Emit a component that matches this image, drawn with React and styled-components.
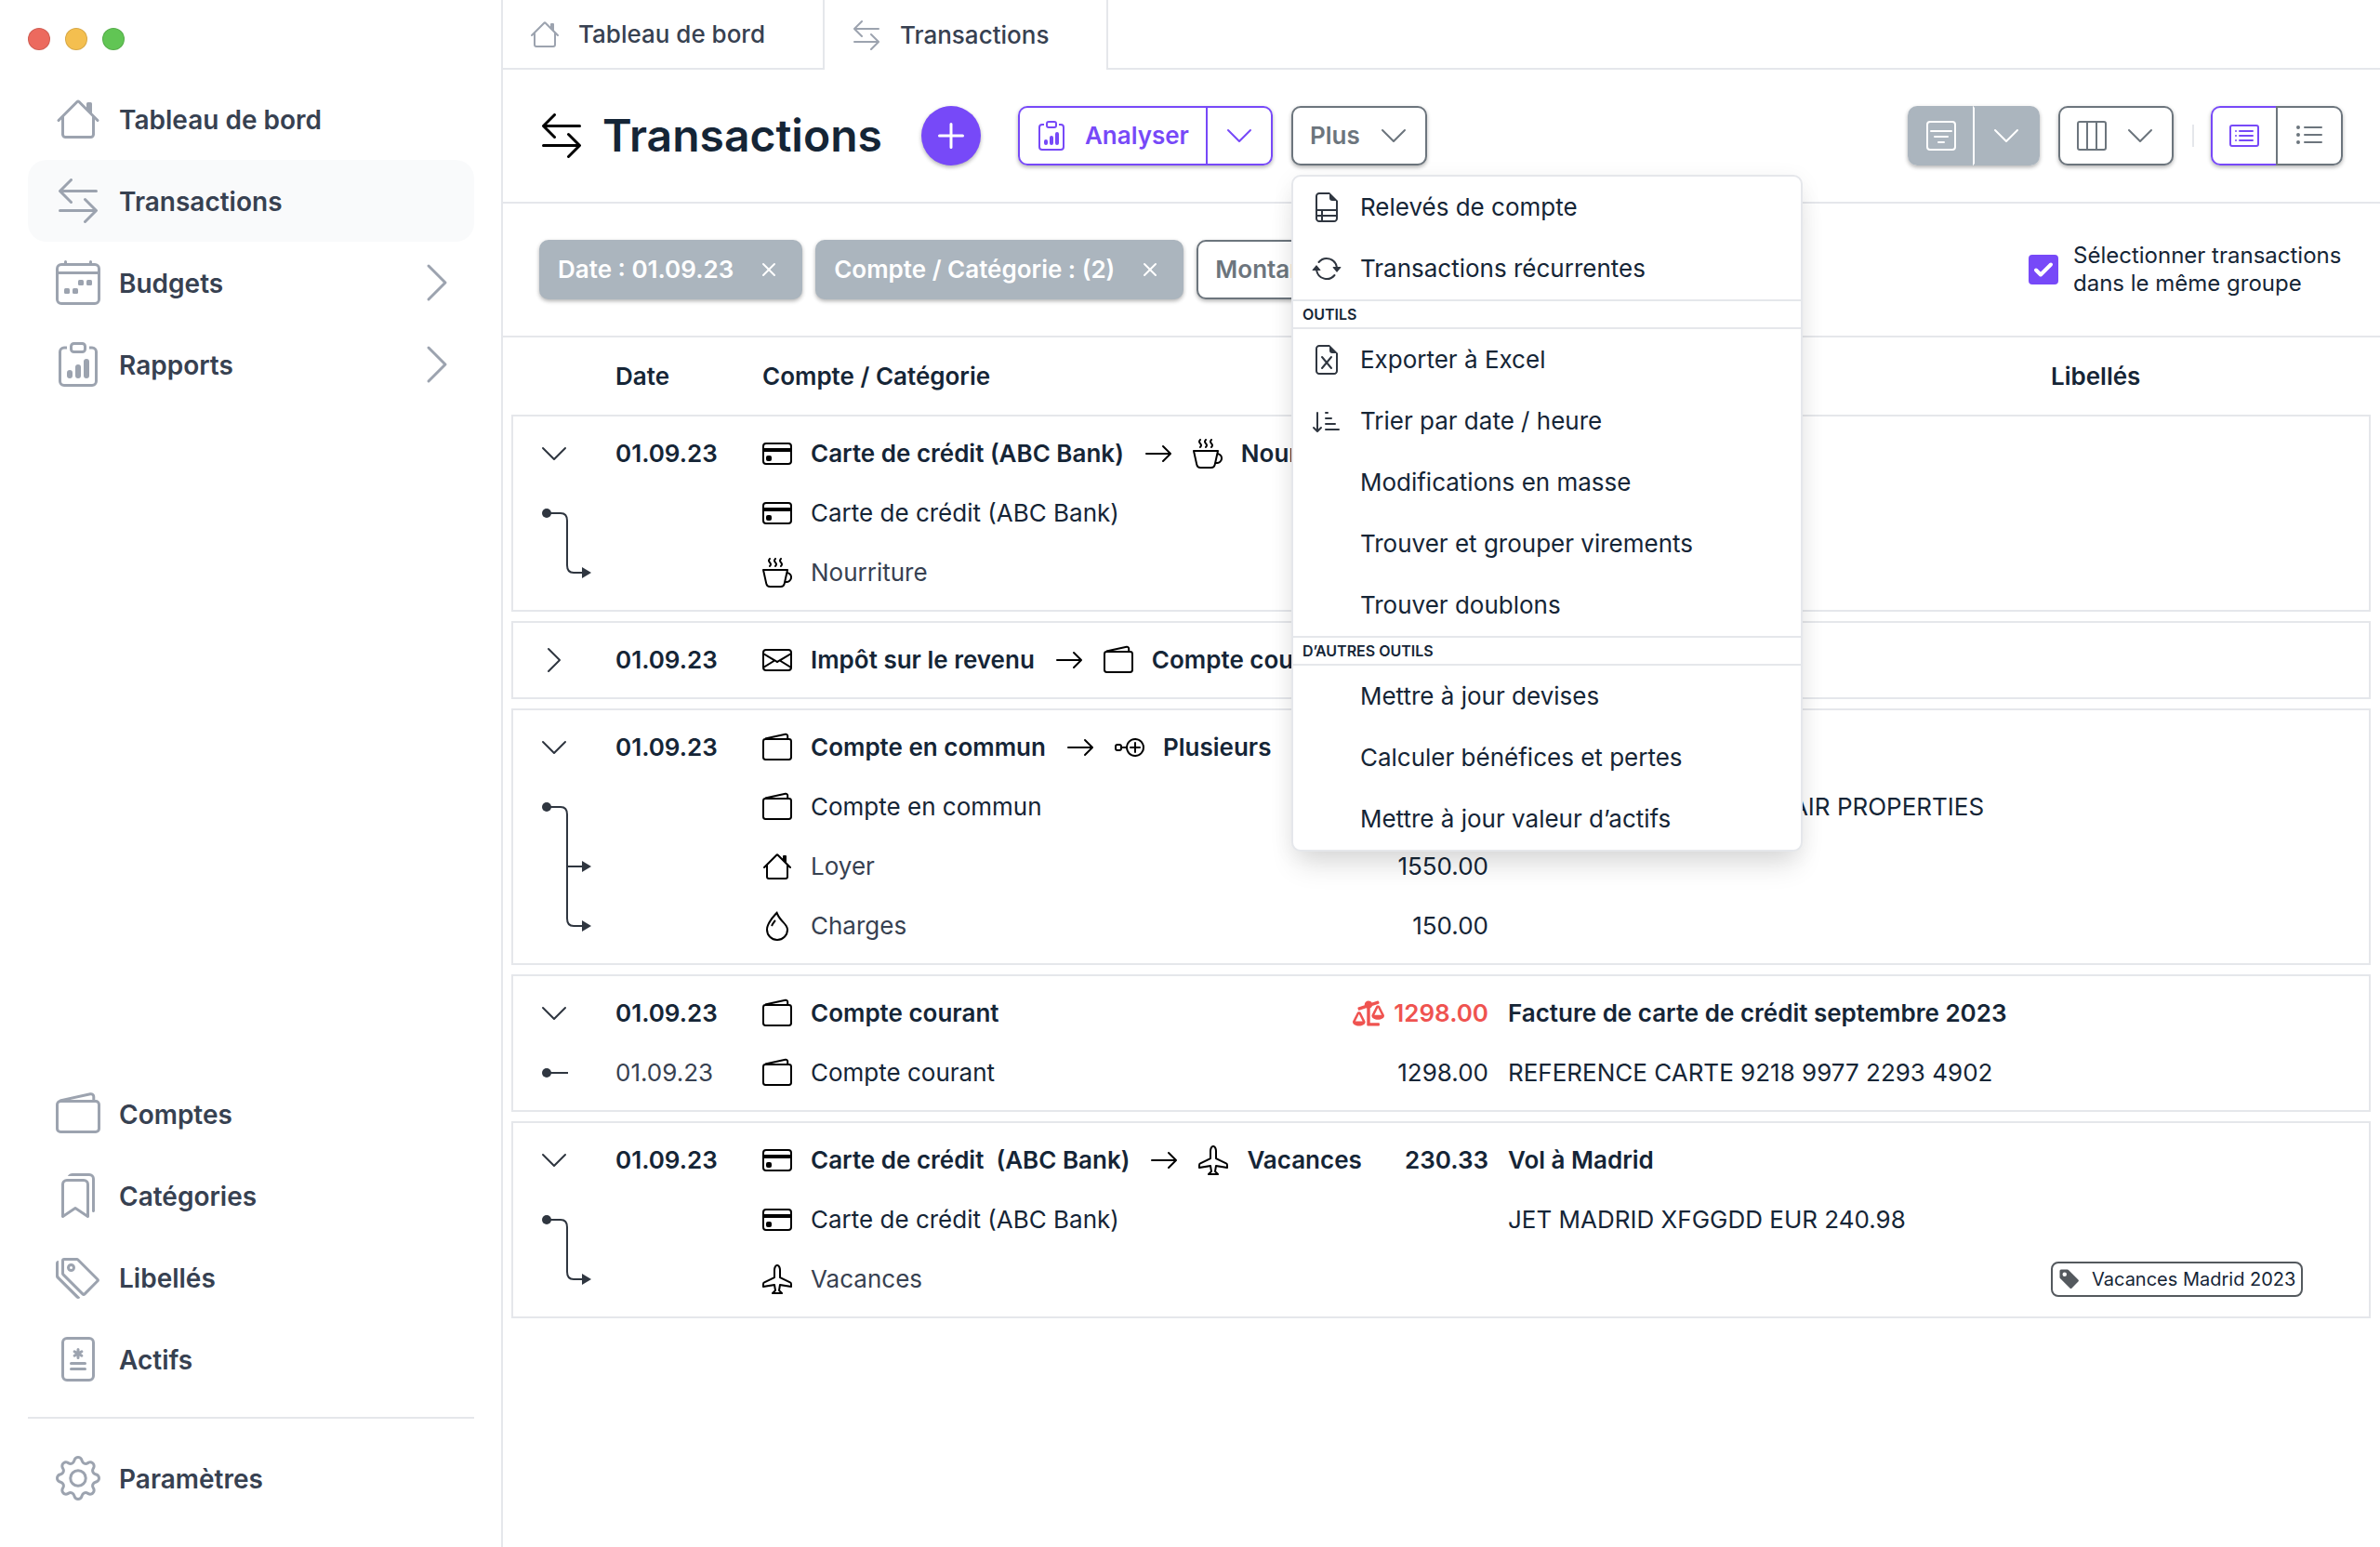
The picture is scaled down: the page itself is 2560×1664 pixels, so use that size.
import React, { useState } from "react";
import styled, { createGlobalStyle, css } from "styled-components";
import {
  BsAirplane,
  BsArrowLeftRight,
  BsArrowRepeat,
  BsArrowRight,
  BsBookmarks,
  BsCardList,
  BsChevronDown,
  BsChevronRight,
  BsClipboardData,
  BsCreditCard,
  BsCupHot,
  BsDroplet,
  BsEnvelope,
  BsFileMedical,
  BsFilterSquare,
  BsGear,
  BsHouse,
  BsLayoutThreeColumns,
  BsListUl,
  BsNodePlus,
  BsSortDownAlt,
  BsTagFill,
  BsTags,
  BsX,
} from "react-icons/bs";
import { FaBalanceScaleLeft } from "react-icons/fa";

const colors = {
  ink: "#152536",
  nav: "#374151",
  soft: "#374151",
  icon: "#9ca3af",
  line: "#e5e7eb",
  purple: "#7749f8",
  grey: "#6c757d",
  chip: "#abb5be",
  red: "#ef5350",
};

const GlobalStyle = createGlobalStyle`
  * {
    box-sizing: border-box;
  }
  body {
    margin: 0;
    background: #fff;
    color: ${colors.ink};
    font-family: Inter, "Liberation Sans", sans-serif;
    font-size: 26px;
    line-height: 32px;
  }
  button {
    font: inherit;
    cursor: pointer;
  }
  svg {
    display: block;
    flex: none;
  }
`;

const Page = styled.div`
  display: flex;
  min-height: 100vh;
`;

const Sidebar = styled.aside`
  flex: none;
  width: 541px;
  padding: 30px 29px 30px 30px;
  border-right: 2px solid ${colors.line};
  display: flex;
  flex-direction: column;
`;

const WindowControls = styled.div`
  display: flex;
  gap: 16px;
  margin-bottom: 30px;
`;

const Dot = styled.span`
  width: 24px;
  height: 24px;
  border-radius: 50%;
  border: 1px solid rgba(0, 0, 0, 0.12);
  background: ${(props) => props.$color};
`;

const Nav = styled.nav`
  display: flex;
  flex-direction: column;

  &:last-child {
    margin-top: auto;
  }
`;

const NavLink = styled.a`
  display: flex;
  align-items: center;
  gap: 20px;
  height: 88px;
  padding: 0 16px 0 30px;
  border-radius: 20px;
  background: ${(props) => (props.$active ? "#f9fafb" : "transparent")};
  color: ${colors.nav};
  font-size: 28px;
  font-weight: 600;
  text-decoration: none;

  svg {
    width: 48px;
    height: 48px;
    color: ${colors.icon};
  }
`;

const NavText = styled.span`
  flex: 1;
  padding-top: 2px;
`;

const Divider = styled.hr`
  width: 100%;
  height: 2px;
  margin: 18px 0 20px;
  border: 0;
  background: ${colors.line};
`;

const Main = styled.main`
  flex: 1;
  min-width: 0;
`;

const Tabs = styled.div`
  display: flex;
  height: 75px;
`;

const Tab = styled.button`
  display: flex;
  align-items: center;
  gap: 20px;
  padding: 0 62px 0 29px;
  border: 0;
  border-right: 2px solid ${colors.line};
  border-bottom: ${(props) => (props.$active ? "0" : `2px solid ${colors.line}`)};
  background: none;
  color: ${colors.nav};
  font-weight: 500;

  svg {
    width: 32px;
    height: 32px;
    color: ${colors.icon};
  }
`;

const TabRest = styled.div`
  flex: 1;
  border-bottom: 2px solid ${colors.line};
`;

const Toolbar = styled.header`
  display: flex;
  align-items: center;
  gap: 20px;
  height: 144px;
  padding: 0 40px 0 39px;
  border-bottom: 2px solid ${colors.line};
`;

const Title = styled.h1`
  display: flex;
  align-items: center;
  gap: 20px;
  margin: 0 22px 0 0;
  font-size: 48px;
  font-weight: 600;
  line-height: 58px;

  svg {
    width: 48px;
    height: 48px;
    color: #000;
  }
`;

const shadow = css`
  box-shadow: 0 2px 4px rgba(0, 0, 0, 0.3);
`;

const AddButton = styled.button`
  width: 64px;
  height: 64px;
  margin-right: 20px;
  padding: 18px;
  border: 0;
  border-radius: 50%;
  background: ${colors.purple};
  color: #fff;
  ${shadow}
`;

const ButtonGroup = styled.div`
  display: flex;
  border-radius: 10px;
  ${shadow}
`;

const tones = {
  purple: css`
    border-color: ${colors.purple};
    color: ${colors.purple};
    background: #fff;
  `,
  grey: css`
    border-color: ${colors.grey};
    color: ${colors.grey};
    background: #fff;
  `,
  filled: css`
    border-color: ${colors.chip};
    color: #fff;
    background: ${colors.chip};
  `,
};

const Button = styled.button`
  display: flex;
  align-items: center;
  gap: 20px;
  height: 64px;
  padding: 0 18px;
  border: 2px solid;
  border-radius: 10px;
  font-weight: 600;
  white-space: nowrap;
  ${(props) => tones[props.$tone]}
  ${(props) => !props.$grouped && shadow}

  svg {
    width: 32px;
    height: 32px;
  }

  ${ButtonGroup} &:first-child {
    border-radius: 10px 0 0 10px;
    border-right: 0;
  }

  ${ButtonGroup} &:last-child {
    border-radius: 0 10px 10px 0;
    border-left-color: ${(props) => (props.$tone === "filled" ? "#fff" : "")};
  }
`;

const Chip = styled(Button)`
  gap: 22px;
`;

const MenuAnchor = styled.div`
  position: relative;
`;

const Menu = styled.div`
  position: absolute;
  z-index: 10;
  top: 74px;
  left: 0;
  width: 550px;
  border: 2px solid ${colors.line};
  border-radius: 10px;
  background: #fff;
  box-shadow: 0 20px 30px -6px rgba(0, 0, 0, 0.12), 0 4px 24px rgba(0, 0, 0, 0.06);
`;

const MenuItem = styled.button`
  display: flex;
  align-items: center;
  gap: 20px;
  width: 100%;
  height: 66px;
  padding: 0 20px;
  border: 0;
  background: none;
  color: ${colors.ink};
  text-align: left;
  white-space: nowrap;

  svg {
    width: 32px;
    height: 32px;
    color: #2f3640;
  }
`;

const MenuIcon = styled.span`
  flex: none;
  width: 32px;
`;

const MenuSection = styled.div`
  height: 32px;
  padding: 0 10px;
  border: solid ${colors.line};
  border-width: 2px 0;
  font-size: 16px;
  font-weight: 600;
  line-height: 28px;
`;

const ToolbarRight = styled.div`
  display: flex;
  align-items: center;
  gap: 20px;
  margin-left: auto;
`;

const Separator = styled.span`
  width: 2px;
  height: 24px;
  margin-right: -2px;
  background: ${colors.line};
`;

const FilterBar = styled.section`
  display: flex;
  align-items: center;
  gap: 14px;
  height: 144px;
  padding: 0 40px 0 39px;
  border-bottom: 2px solid ${colors.line};
`;

const GroupToggle = styled.label`
  display: flex;
  align-items: center;
  gap: 16px;
  width: 338px;
  margin-left: auto;
  font-size: 24px;
  line-height: 30px;
  cursor: pointer;
`;

const Checkbox = styled.input`
  appearance: none;
  flex: none;
  width: 32px;
  height: 32px;
  margin: 0;
  border: 2px solid ${colors.purple};
  border-radius: 4px;

  &:checked {
    background: ${colors.purple}
      url("data:image/svg+xml,%3Csvg xmlns='http://www.w3.org/2000/svg' viewBox='0 0 28 28' fill='none' stroke='white' stroke-width='4' stroke-linecap='round' stroke-linejoin='round'%3E%3Cpath d='M6 14.5l5 5L22 8.500'/%3E%3C/svg%3E")
      center / 28px no-repeat;
  }
`;

const Table = styled.table`
  display: block;
  padding: 0 10px 0 9px;
`;

const TableHead = styled.thead`
  display: block;
  padding: 0 2px;
`;

const Group = styled.tbody`
  display: block;
  margin-bottom: 10px;
  padding: 8px 0;
  border: 2px solid ${colors.line};
`;

const Row = styled.tr`
  display: grid;
  grid-template-columns: 110px 158px minmax(0, 620fr) 182px minmax(0, 584fr) 342px;
  align-items: center;
  height: 64px;
  font-weight: ${(props) => (props.$strong ? 600 : 400)};
  white-space: nowrap;

  ${TableHead} & {
    height: 83px;
  }
`;

const Cell = styled.td`
  padding: 0;
  color: ${(props) => (props.$soft ? colors.soft : "inherit")};
`;

const HeadCell = styled.th`
  padding: 0;
  font-weight: 600;
  text-align: left;
`;

const Expander = styled.button`
  display: block;
  margin-left: 28px;
  padding: 0;
  border: 0;
  background: none;
  color: #2f3640;

  svg {
    width: 32px;
    height: 32px;
  }
`;

const Accounts = styled.div`
  display: flex;
  align-items: center;
  gap: 20px;
  white-space: pre;

  svg {
    width: 32px;
    height: 32px;
    color: #000;
  }

  span + svg {
    margin: 0 1px;
  }
`;

const Amount = styled.div`
  display: flex;
  align-items: center;
  justify-content: flex-end;
  gap: 10px;
  padding-right: 21px;
  color: ${(props) => (props.$alert ? colors.red : "inherit")};

  svg {
    width: 34px;
    height: 28px;
  }
`;

const AmountHead = styled(HeadCell)`
  padding-right: 21px;
  text-align: right;
`;

const Branch = styled.svg`
  width: 109px;
  height: 64px;
  overflow: visible;
  color: #2f3640;
`;

const Tag = styled.span`
  display: inline-flex;
  align-items: center;
  gap: 12px;
  height: 38px;
  padding: 0 6px;
  border: 2px solid #54595e;
  border-radius: 8px;
  font-size: 20px;

  svg {
    width: 24px;
    height: 24px;
    color: #54595e;
  }
`;

function WalletIcon() {
  return (
    <svg viewBox="0 0 16 16" fill="none" stroke="currentColor" aria-hidden="true">
      <rect x="0.500" y="3.500" width="15" height="11" rx="1.200" />
      <path d="M1.500 3.300 12.400 0.900a1 1 0 0 1 1.200 1V3.500" />
    </svg>
  );
}

function BudgetIcon() {
  return (
    <svg viewBox="0 0 16 16" fill="none" stroke="currentColor" aria-hidden="true">
      <rect x="0.500" y="1.500" width="15" height="14" rx="1.500" />
      <path d="M1 4.500h14" />
      <path d="M3.500 0.500v1M12.500 0.500v1" strokeLinecap="round" />
      <g fill="currentColor" stroke="none">
        <rect x="8" y="7" width="2" height="2" rx="0.500" />
        <rect x="11" y="7" width="2" height="2" rx="0.500" />
        <rect x="3" y="10" width="2" height="2" rx="0.500" />
        <rect x="6" y="10" width="2" height="2" rx="0.500" />
      </g>
    </svg>
  );
}

function PlusIcon() {
  return (
    <svg viewBox="0 0 28 28" fill="none" stroke="currentColor" strokeWidth="3" strokeLinecap="round">
      <path d="M14 1.500v25M1.500 14h25" />
    </svg>
  );
}

// sheet of paper with a folded corner, the content goes inside
function FileIcon({ children }) {
  return (
    <svg viewBox="0 0 16 16" fill="none" stroke="currentColor" aria-hidden="true">
      <path d="M9.500 0.500H4A1.500 1.500 0 0 0 2.500 2v12A1.500 1.500 0 0 0 4 15.500h8a1.500 1.500 0 0 0 1.500-1.500V4.500" />
      <path d="M9.500 3V0L14 4.500h-3A1.500 1.500 0 0 1 9.500 3z" fill="currentColor" stroke="none" />
      {children}
    </svg>
  );
}

function StatementIcon() {
  return (
    <FileIcon>
      <path d="M3 9.500h10M3 12.500h10M5.500 9.500v5.500" />
    </FileIcon>
  );
}

function ExcelIcon() {
  return (
    <FileIcon>
      <path d="M5.500 6.500l5 6M10.500 6.500l-5 6" strokeLinecap="round" />
    </FileIcon>
  );
}

// start: the dot of a split, mid: a target in between, end: the last target
function BranchMark({ kind }) {
  return (
    <Branch viewBox="0 0 109 64" fill="none" stroke="currentColor" strokeWidth="2" aria-hidden="true">
      {(kind === "start" || kind === "single") && (
        <circle cx="36" cy="32" r="5" fill="currentColor" stroke="none" />
      )}
      {kind === "single" && <path d="M36 32h23" />}
      {kind === "start" && <path d="M36 32h15q7 0 7 8v24" />}
      {kind === "mid" && <path d="M58 0v64M58 32h18" />}
      {kind === "end" && <path d="M58 0v24q0 8 7 8h11" />}
      {(kind === "mid" || kind === "end") && (
        <path d="M74 26l10 6-10 6z" fill="currentColor" stroke="none" />
      )}
    </Branch>
  );
}

const mainNav = [
  { text: "Tableau de bord", Icon: BsHouse },
  { text: "Transactions", Icon: BsArrowLeftRight, active: true },
  { text: "Budgets", Icon: BudgetIcon, more: true },
  { text: "Rapports", Icon: BsClipboardData, more: true },
];

const bottomNav = [
  { text: "Comptes", Icon: WalletIcon },
  { text: "Catégories", Icon: BsBookmarks },
  { text: "Libellés", Icon: BsTags },
  { text: "Actifs", Icon: BsFileMedical },
];

const menuSections = [
  {
    items: [
      { text: "Relevés de compte", Icon: StatementIcon },
      { text: "Transactions récurrentes", Icon: BsArrowRepeat },
    ],
  },
  {
    title: "OUTILS",
    items: [
      { text: "Exporter à Excel", Icon: ExcelIcon },
      { text: "Trier par date / heure", Icon: BsSortDownAlt },
      { text: "Modifications en masse" },
      { text: "Trouver et grouper virements" },
      { text: "Trouver doublons" },
    ],
  },
  {
    title: "D’AUTRES OUTILS",
    items: [
      { text: "Mettre à jour devises" },
      { text: "Calculer bénéfices et pertes" },
      { text: "Mettre à jour valeur d’actifs" },
    ],
  },
];

const groups = [
  {
    date: "01.09.23",
    from: { text: "Carte de crédit (ABC Bank)", Icon: BsCreditCard },
    to: { text: "Nourriture", Icon: BsCupHot },
    rows: [
      { kind: "start", text: "Carte de crédit (ABC Bank)", Icon: BsCreditCard },
      { kind: "end", text: "Nourriture", Icon: BsCupHot },
    ],
  },
  {
    date: "01.09.23",
    from: { text: "Impôt sur le revenu", Icon: BsEnvelope },
    to: { text: "Compte courant", Icon: WalletIcon },
    rows: [],
  },
  {
    date: "01.09.23",
    from: { text: "Compte en commun", Icon: WalletIcon },
    to: { text: "Plusieurs", Icon: BsNodePlus },
    rows: [
      {
        kind: "start",
        text: "Compte en commun",
        Icon: WalletIcon,
        note: "LOYER SEPT 2023 MAYFAIR PROPERTIES",
      },
      { kind: "mid", text: "Loyer", Icon: BsHouse, amount: "1550.00" },
      { kind: "end", text: "Charges", Icon: BsDroplet, amount: "150.00" },
    ],
  },
  {
    date: "01.09.23",
    from: { text: "Compte courant", Icon: WalletIcon },
    amount: "1298.00",
    alert: true,
    note: "Facture de carte de crédit septembre 2023",
    rows: [
      {
        kind: "single",
        date: "01.09.23",
        text: "Compte courant",
        Icon: WalletIcon,
        amount: "1298.00",
        note: "REFERENCE CARTE 9218 9977 2293 4902",
      },
    ],
  },
  {
    date: "01.09.23",
    from: { text: "Carte de crédit  (ABC Bank)", Icon: BsCreditCard },
    to: { text: "Vacances", Icon: BsAirplane },
    amount: "230.33",
    note: "Vol à Madrid",
    rows: [
      {
        kind: "start",
        text: "Carte de crédit (ABC Bank)",
        Icon: BsCreditCard,
        note: "JET MADRID XFGGDD EUR 240.98",
      },
      { kind: "end", text: "Vacances", Icon: BsAirplane, tag: "Vacances Madrid 2023" },
    ],
  },
];

function NavItem({ item }) {
  return (
    <NavLink href="#" $active={item.active}>
      <item.Icon />
      <NavText>{item.text}</NavText>
      {item.more && <BsChevronRight />}
    </NavLink>
  );
}

function TransactionGroup({ group }) {
  return (
    <Group>
      <Row $strong>
        <Cell>
          <Expander aria-label="Afficher le détail">
            {group.rows.length > 0 ? <BsChevronDown /> : <BsChevronRight />}
          </Expander>
        </Cell>
        <Cell>{group.date}</Cell>
        <Cell>
          <Accounts>
            <group.from.Icon />
            <span>{group.from.text}</span>
            {group.to && (
              <>
                <BsArrowRight />
                <group.to.Icon />
                <span>{group.to.text}</span>
              </>
            )}
          </Accounts>
        </Cell>
        <Cell>
          <Amount $alert={group.alert}>
            {group.alert && <FaBalanceScaleLeft />}
            {group.amount}
          </Amount>
        </Cell>
        <Cell>{group.note}</Cell>
        <Cell />
      </Row>
      {group.rows.map((row, index) => (
        <Row key={index}>
          <Cell>
            <BranchMark kind={row.kind} />
          </Cell>
          <Cell $soft>{row.date}</Cell>
          <Cell $soft={row.kind === "mid" || row.kind === "end"}>
            <Accounts>
              <row.Icon />
              <span>{row.text}</span>
            </Accounts>
          </Cell>
          <Cell>
            <Amount>{row.amount}</Amount>
          </Cell>
          <Cell>{row.note}</Cell>
          <Cell>
            {row.tag && (
              <Tag>
                <BsTagFill />
                {row.tag}
              </Tag>
            )}
          </Cell>
        </Row>
      ))}
    </Group>
  );
}

function App() {
  const [menuOpen, setMenuOpen] = useState(true);
  const [sameGroup, setSameGroup] = useState(true);

  return (
    <>
      <GlobalStyle />
      <Page>
        <Sidebar>
          <WindowControls>
            <Dot $color="#ec6a5e" />
            <Dot $color="#f4bf4f" />
            <Dot $color="#61c554" />
          </WindowControls>
          <Nav>
            {mainNav.map((item) => (
              <NavItem key={item.text} item={item} />
            ))}
          </Nav>
          <Nav>
            {bottomNav.map((item) => (
              <NavItem key={item.text} item={item} />
            ))}
            <Divider />
            <NavItem item={{ text: "Paramètres", Icon: BsGear }} />
          </Nav>
        </Sidebar>
        <Main>
          <Tabs>
            <Tab>
              <BsHouse />
              Tableau de bord
            </Tab>
            <Tab $active>
              <BsArrowLeftRight />
              Transactions
            </Tab>
            <TabRest />
          </Tabs>
          <Toolbar>
            <Title>
              <BsArrowLeftRight />
              Transactions
            </Title>
            <AddButton aria-label="Ajouter">
              <PlusIcon />
            </AddButton>
            <ButtonGroup>
              <Button $tone="purple" $grouped>
                <BsClipboardData />
                Analyser
              </Button>
              <Button $tone="purple" $grouped aria-label="Options d’analyse">
                <BsChevronDown />
              </Button>
            </ButtonGroup>
            <MenuAnchor>
              <Button $tone="grey" onClick={() => setMenuOpen(!menuOpen)}>
                Plus
                <BsChevronDown />
              </Button>
              {menuOpen && (
                <Menu>
                  {menuSections.map((section, index) => (
                    <React.Fragment key={index}>
                      {section.title && <MenuSection>{section.title}</MenuSection>}
                      {section.items.map((item) => (
                        <MenuItem key={item.text}>
                          <MenuIcon>{item.Icon && <item.Icon />}</MenuIcon>
                          {item.text}
                        </MenuItem>
                      ))}
                    </React.Fragment>
                  ))}
                </Menu>
              )}
            </MenuAnchor>
            <ToolbarRight>
              <ButtonGroup>
                <Button $tone="filled" $grouped aria-label="Filtrer">
                  <BsFilterSquare />
                </Button>
                <Button $tone="filled" $grouped aria-label="Options de filtre">
                  <BsChevronDown />
                </Button>
              </ButtonGroup>
              <Button $tone="grey" aria-label="Colonnes">
                <BsLayoutThreeColumns />
                <BsChevronDown />
              </Button>
              <Separator />
              <ButtonGroup>
                <Button $tone="purple" $grouped aria-label="Vue détaillée">
                  <BsCardList />
                </Button>
                <Button $tone="grey" $grouped aria-label="Vue liste">
                  <BsListUl />
                </Button>
              </ButtonGroup>
            </ToolbarRight>
          </Toolbar>
          <FilterBar>
            <Chip $tone="filled">
              Date : 01.09.23
              <BsX />
            </Chip>
            <Chip $tone="filled">
              Compte / Catégorie : (2)
              <BsX />
            </Chip>
            <Chip $tone="grey">Montant</Chip>
            <GroupToggle>
              <Checkbox
                type="checkbox"
                checked={sameGroup}
                onChange={(event) => setSameGroup(event.target.checked)}
              />
              Sélectionner transactions dans le même groupe
            </GroupToggle>
          </FilterBar>
          <Table>
            <TableHead>
              <Row>
                <HeadCell />
                <HeadCell>Date</HeadCell>
                <HeadCell>Compte / Catégorie</HeadCell>
                <AmountHead>Montant</AmountHead>
                <HeadCell>Description</HeadCell>
                <HeadCell>Libellés</HeadCell>
              </Row>
            </TableHead>
            {groups.map((group, index) => (
              <TransactionGroup key={index} group={group} />
            ))}
          </Table>
        </Main>
      </Page>
    </>
  );
}

export default App;
